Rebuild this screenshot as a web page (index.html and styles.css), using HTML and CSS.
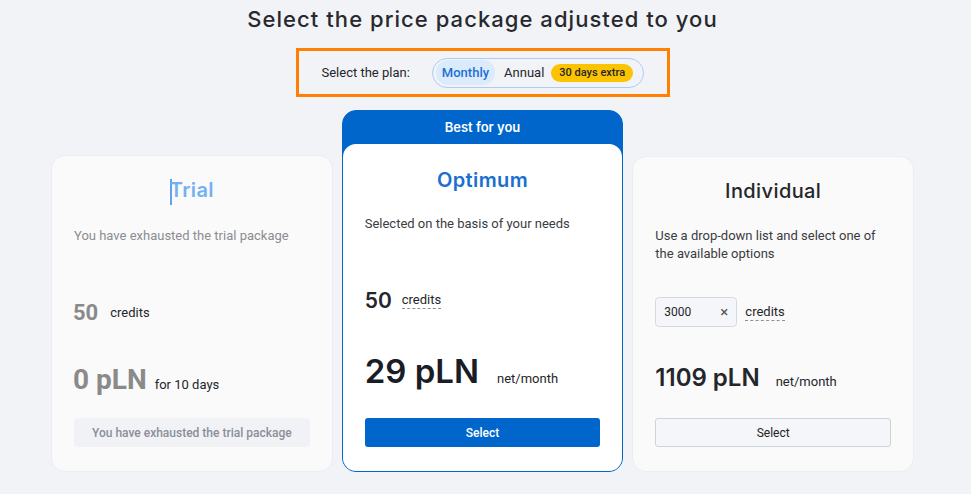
FILE: index.html
```html
<!DOCTYPE html>
<html>
  <head>
    <title>Pricing</title>
    <meta charset="utf-8" />
    <meta name="viewport" content="width=device-width, initial-scale=1.0" />
    <link rel="stylesheet" href="styles.css">
  </head>
  <body>
    <div class="page">
      <h2 class="heading">Select the price package adjusted to you</h2>

      <div class="plan-box">
        <span class="plan-label">Select the plan:</span>
        <div class="toggle">
          <span class="toggle-item active">Monthly</span>
          <span class="toggle-item">Annual</span>
          <span class="badge">30 days extra</span>
        </div>
      </div>

      <div class="cards">
        <div class="card trial">
          <div class="card-body">
            <h3 class="card-title"><span class="caret"></span>Trial</h3>
            <p class="desc">You have exhausted the trial package</p>
            <div class="credits-row">
              <span class="amount">50</span>
              <span class="unit">credits</span>
            </div>
            <div class="price-row">
              <span class="price">0 pLN</span>
              <span class="period">for 10 days</span>
            </div>
            <button class="btn btn-disabled">You have exhausted the trial package</button>
          </div>
        </div>

        <div class="card featured">
          <div class="ribbon">Best for you</div>
          <div class="card-body">
            <h3 class="card-title">Optimum</h3>
            <p class="desc">Selected on the basis of your needs</p>
            <div class="credits-row">
              <span class="amount">50</span>
              <span class="unit dashed">credits</span>
            </div>
            <div class="price-row">
              <span class="price">29 pLN</span>
              <span class="period">net/month</span>
            </div>
            <button class="btn btn-primary">Select</button>
          </div>
        </div>

        <div class="card individual">
          <div class="card-body">
            <h3 class="card-title">Individual</h3>
            <p class="desc">Use a drop-down list and select one of the available options</p>
            <div class="credits-row">
              <div class="select-box">
                <span>3000</span>
                <span class="clear">&times;</span>
              </div>
              <span class="unit dashed">credits</span>
            </div>
            <div class="price-row">
              <span class="price">1109 pLN</span>
              <span class="period">net/month</span>
            </div>
            <button class="btn btn-outline">Select</button>
          </div>
        </div>
      </div>
    </div>
  </body>
</html>
```

FILE: styles.css
```css
body {
  margin: 0;
  background: #f2f3f7;
  font-family: Roboto, "Liberation Sans", sans-serif;
  color: #24262b;
}

.page {
  width: 863px;
  margin-left: 51px;
  display: flex;
  flex-direction: column;
  align-items: center;
}

.heading {
  margin: 5px 0 0;
  font-family: Inter, "Liberation Sans", sans-serif;
  font-size: 22px;
  font-weight: 500;
  letter-spacing: 1.05px;
  line-height: 28px;
  color: #27292e;
}

.plan-box {
  margin-top: 15px;
  width: 368px;
  height: 43px;
  border: 3px solid #ff8000;
  display: flex;
  align-items: center;
  box-sizing: content-box;
}

.plan-label {
  font-size: 13px;
  margin-left: 23px;
  margin-right: 22px;
}

.toggle {
  display: flex;
  align-items: center;
  height: 28px;
  padding: 0 10px 0 3px;
  border: 1px solid #a9cdf7;
  border-radius: 15px;
  font-size: 13px;
}

.toggle-item {
  padding: 5px 6px;
  border-radius: 12px;
}

.toggle-item.active {
  background: #dcebfc;
  color: #1b70d6;
  font-weight: 500;
  margin-right: 3px;
}

.badge {
  margin-left: 1px;
  background: #fcc300;
  border-radius: 9px;
  padding: 2px 8px;
  font-size: 11px;
  font-weight: 500;
  line-height: 14px;
}

.cards {
  margin-top: 13px;
  width: 100%;
  display: flex;
  align-items: flex-end;
  gap: 9px;
}

.card {
  flex: 1;
  background: #fafafa;
  border: 1px solid #ebedf0;
  border-radius: 14px;
}

.card-body {
  padding: 20px 22px 24px;
  display: flex;
  flex-direction: column;
}

.card-title {
  margin: 0;
  text-align: center;
  font-family: Inter, "Liberation Sans", sans-serif;
  font-size: 20px;
  font-weight: 500;
  letter-spacing: 0.4px;
  line-height: 28px;
  color: #24262b;
}

.caret {
  display: inline-block;
  width: 2px;
  height: 26px;
  background: #5ea3f2;
  vertical-align: middle;
  margin-right: -2px;
}

.desc {
  margin: 22px 0 0;
  min-height: 36px;
  font-size: 13px;
  line-height: 18px;
  color: #3a3c42;
}

.credits-row {
  margin-top: 34px;
  height: 30px;
  display: flex;
  align-items: center;
}

.amount {
  font-family: Inter, "Liberation Sans", sans-serif;
  font-size: 21px;
  font-weight: 600;
  margin-right: 10px;
}

.unit {
  font-size: 13px;
}

.dashed {
  border-bottom: 1px dashed #8d9098;
  padding-bottom: 1px;
}

.price-row {
  margin-top: 32px;
  height: 40px;
  display: flex;
  align-items: baseline;
  padding-top: 4px;
  box-sizing: border-box;
}

.price {
  font-family: Inter, "Liberation Sans", sans-serif;
  font-size: 24px;
  font-weight: 600;
  margin-right: 16px;
}

.period {
  font-size: 13px;
}

.btn {
  margin-top: 19px;
  height: 29px;
  border-radius: 3px;
  font-family: Roboto, "Liberation Sans", sans-serif;
  font-size: 12px;
  font-weight: 500;
  cursor: pointer;
}

.btn-disabled {
  background: #f1f2f5;
  border: none;
  color: #8a8f99;
}

.btn-primary {
  background: #0066cc;
  border: none;
  color: #fff;
}

.btn-outline {
  background: #f5f6f9;
  border: 1px solid #ced2d9;
  color: #222;
  font-weight: 400;
}

/* trial */
.trial .card-title {
  color: #74b1f4;
  font-weight: 600;
}

.trial .desc {
  color: #8b8d91;
}

.trial .amount,
.trial .price {
  font-family: Roboto, "Liberation Sans", sans-serif;
  font-weight: 700;
  color: #8a8a8a;
}

.trial .amount {
  font-size: 22px;
  margin-left: -1px;
  margin-right: 12px;
}

.trial .price {
  font-size: 28px;
  margin-left: -1px;
  margin-right: 8px;
}

/* featured */
.featured {
  background: #0066cc;
  border-color: #0066cc;
}

.ribbon {
  height: 33px;
  line-height: 32px;
  text-align: center;
  color: #fff;
  font-family: Inter, "Liberation Sans", sans-serif;
  font-size: 13px;
  font-weight: 600;
}

.featured .card-body {
  background: #fff;
  border-radius: 13px;
  padding-top: 22px;
}

.featured .card-title {
  color: #1a6fd0;
  font-weight: 600;
}

.featured .desc {
  margin-top: 21px;
}

.featured .price-row {
  margin-top: 36px;
  padding-top: 0;
}

.featured .price {
  font-size: 33px;
  margin-right: 18px;
  color: #1a1d26;
}

.featured .btn {
  margin-top: 27px;
}

/* individual */
.select-box {
  width: 82px;
  height: 30px;
  box-sizing: border-box;
  display: flex;
  align-items: center;
  justify-content: space-between;
  padding: 0 8px;
  background: #f5f6fa;
  border: 1px solid #d5d8de;
  border-radius: 4px;
  font-size: 12px;
  margin-right: 8px;
}

.clear {
  font-size: 15px;
  color: #555;
}
```
